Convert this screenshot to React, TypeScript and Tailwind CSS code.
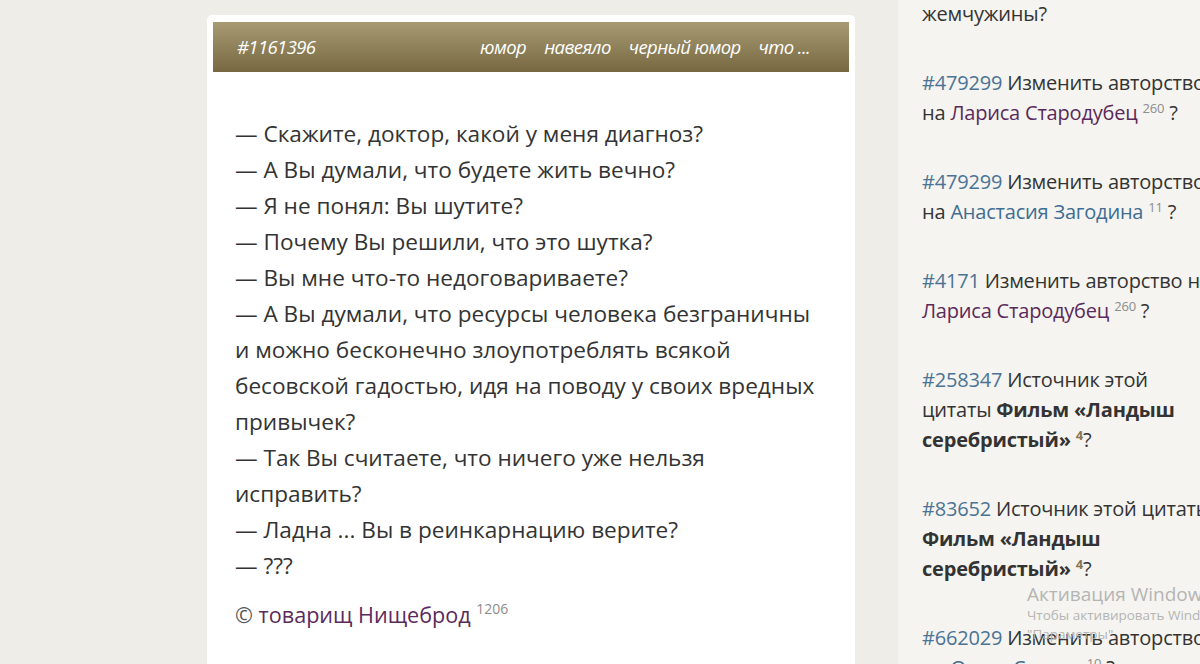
import React from "react";

const tags = ["юмор", "навеяло", "черный юмор", "что ..."];

// реплики, разбитые по строкам как на сайте
const lines = [
  "— Скажите, доктор, какой у меня диагноз?",
  "— А Вы думали, что будете жить вечно?",
  "— Я не понял: Вы шутите?",
  "— Почему Вы решили, что это шутка?",
  "— Вы мне что-то недоговариваете?",
  "— А Вы думали, что ресурсы человека безграничны",
  "и можно бесконечно злоупотреблять всякой",
  "бесовской гадостью, идя на поводу у своих вредных",
  "привычек?",
  "— Так Вы считаете, что ничего уже нельзя",
  "исправить?",
  "— Ладна ... Вы в реинкарнацию верите?",
  "— ???",
];

const font = { fontFamily: '"Open Sans", "Noto Sans", sans-serif' };

function Num({ n }: { n: string }) {
  return <a className="text-[#4a7395]">{n}</a>;
}

function Sup({ v, bold }: { v: string; bold?: boolean }) {
  return (
    <span
      className={`relative -top-[7px] text-[13px] leading-none ${
        bold ? "text-[#8a7650] font-bold" : "text-[#8c8c8c]"
      }`}
    >
      {v}
    </span>
  );
}

export default function App() {
  return (
    <div
      className="relative w-[1200px] h-[664px] overflow-hidden bg-[#eeede8] flex"
      style={font}
    >
      {/* основная колонка */}
      <div className="w-[855px] shrink-0 pl-[207px] pt-[15px]">
        <div className="bg-white rounded-[5px] p-[6px] pt-[7px] h-[700px]">
          <div className="h-[50px] bg-gradient-to-b from-[#a89b73] to-[#776842] flex items-center justify-between pl-[24px] pr-[39px] text-white italic text-[18.5px] tracking-[-0.6px]">
            <span>#1161396</span>
            <div className="flex gap-[18px]">
              {tags.map((t) => (
                <span key={t}>{t}</span>
              ))}
            </div>
          </div>

          <div className="pl-[22px] pt-[44px] text-[#333333] text-[22.6px] leading-[36px]">
            {lines.map((l, i) => (
              <div key={i} className="whitespace-nowrap">
                {l}
              </div>
            ))}
            <div className="mt-[13px] whitespace-nowrap text-[21.6px]">
              <span className="text-[#555]">© </span>
              <a className="text-[#5b2a5b]">товарищ Нищеброд</a>{" "}
              <span className="relative -top-[9px] text-[14px] leading-none text-[#8c8c8c]">1206</span>
            </div>
          </div>
        </div>
      </div>

      {/* боковая панель */}
      <div className="ml-[43px] flex-1 bg-[#f5f4f0] pl-[24px] -mt-[1px] text-[20px] leading-[30px] text-[#333333] tracking-[-0.2px] whitespace-nowrap">
        <p>жемчужины?</p>

        <p className="mt-[39px]">
          <Num n="#479299" /> Изменить авторство
          <br />
          на <a className="text-[#5b2a5b]">Лариса Стародубец</a> <Sup v="260" /> ?
        </p>

        <p className="mt-[39px]">
          <Num n="#479299" /> Изменить авторство
          <br />
          на <a className="text-[#3f6d92]">Анастасия Загодина</a> <Sup v="11" /> ?
        </p>

        <p className="mt-[39px]">
          <Num n="#4171" /> Изменить авторство на
          <br />
          <a className="text-[#5b2a5b]">Лариса Стародубец</a> <Sup v="260" /> ?
        </p>

        <p className="mt-[39px]">
          <Num n="#258347" /> Источник этой
          <br />
          цитаты <b>Фильм «Ландыш</b>
          <br />
          <b>серебристый»</b> <Sup v="4" bold />?
        </p>

        <p className="mt-[39px]">
          <Num n="#83652" /> Источник этой цитаты
          <br />
          <b>Фильм «Ландыш</b>
          <br />
          <b>серебристый»</b> <Sup v="4" bold />?
        </p>

        <p className="mt-[39px]">
          <Num n="#662029" /> Изменить авторство
          <br />
          на <a className="text-[#3f6d92]">Ольга Седова</a> <Sup v="10" /> ?
        </p>
      </div>

      {/* водяной знак активации */}
      <div className="absolute left-[1027px] top-[582px] text-[#b4b4b4] whitespace-nowrap pointer-events-none">
        <div className="text-[19px] leading-[24px]">Активация Windows</div>
        <div className="text-[13.5px] leading-[19px]">Чтобы активировать Windows, перейдите в раздел</div>
        <div className="text-[13.5px] leading-[19px]">"Параметры".</div>
      </div>
    </div>
  );
}
